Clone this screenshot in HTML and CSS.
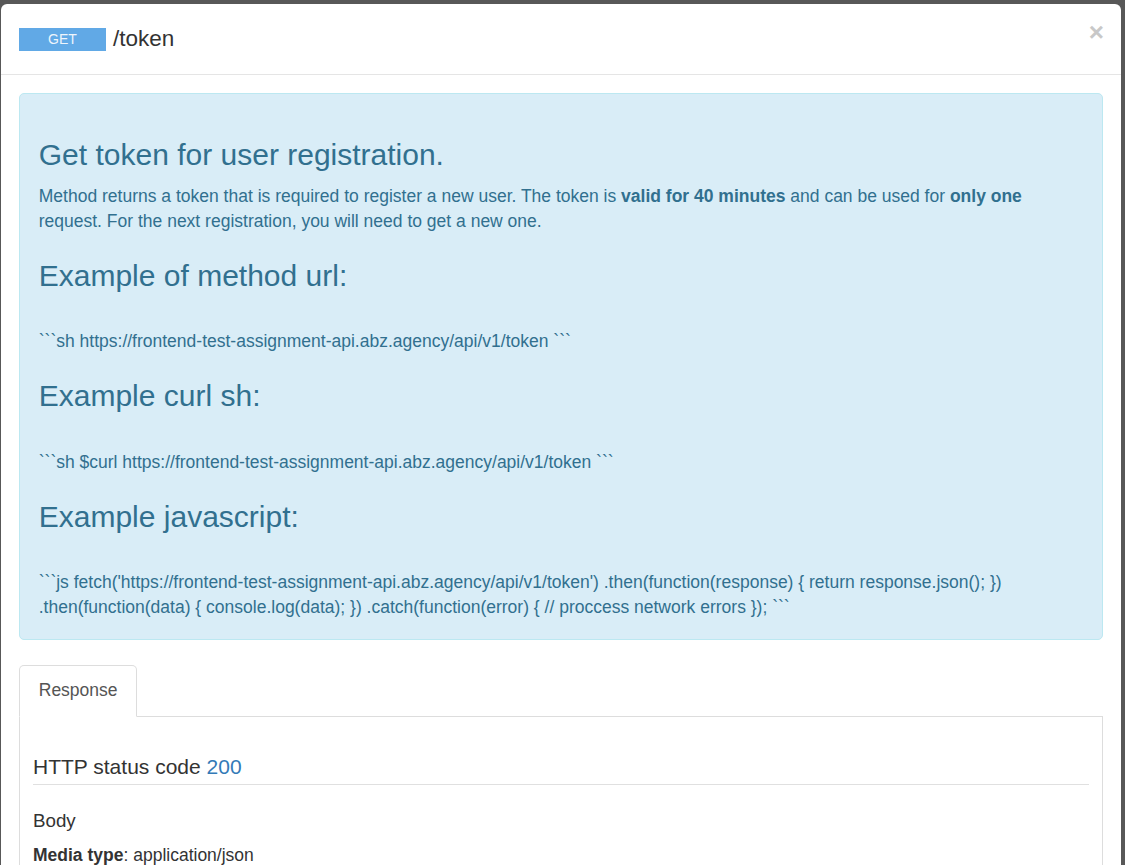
FILE: index.html
```html
<!DOCTYPE html>
<html lang="en">
<head>
<meta charset="utf-8">
<title>/token</title>
<link rel="stylesheet" href="styles.css">
</head>
<body>
<div class="modal">
  <div class="modal-header">
    <h4 class="modal-title"><span class="method-get">GET</span><span class="path">/token</span></h4>
    <button class="close" type="button">×</button>
  </div>
  <div class="modal-body">
    <div class="alert">
      <h3>Get token for user registration.</h3>
      <p>Method returns a token that is required to register a new user. The token is <strong>valid for 40 minutes</strong> and can be used for <strong>only one</strong> request. For the next registration, you will need to get a new one.</p>
      <h3>Example of method url:</h3>
      <p class="code">```sh https://frontend-test-assignment-api.abz.agency/api/v1/token ```</p>
      <h3>Example curl sh:</h3>
      <p class="code">```sh $curl https://frontend-test-assignment-api.abz.agency/api/v1/token ```</p>
      <h3>Example javascript:</h3>
      <p class="code">```js fetch('https://frontend-test-assignment-api.abz.agency/api/v1/token') .then(function(response) { return response.json(); }) .then(function(data) { console.log(data); }) .catch(function(error) { // proccess network errors }); ```</p>
    </div>
    <ul class="tabs">
      <li class="tab active">Response</li>
    </ul>
    <div class="tab-pane">
      <h4 class="status">HTTP status code <span class="code-num">200</span></h4>
      <div class="body-label">Body</div>
      <div class="media"><strong>Media type</strong>: application/json</div>
    </div>
  </div>
</div>
</body>
</html>
```
FILE: styles.css
```css
html, body {
  margin: 0;
  padding: 0;
  height: 100%;
  overflow: hidden;
}
body {
  background: #585858;
  font-family: "Liberation Sans", Arial, Helvetica, sans-serif;
  font-size: 17.5px;
  line-height: 25px;
  color: #333;
}
.modal {
  margin: 4px 4px 0 1px;
  background: #fff;
  border-radius: 6px 6px 0 0;
  min-height: 900px;
}
.modal-header {
  padding: 18.75px 18px;
  border-bottom: 1px solid #e5e5e5;
  display: flex;
  justify-content: space-between;
  align-items: flex-start;
}
.modal-title {
  margin: 0;
  font-size: 22.5px;
  line-height: 32px;
  font-weight: normal;
  color: #333;
  display: flex;
  align-items: center;
  gap: 7px;
}
.method-get {
  display: inline-block;
  width: 87px;
  height: 23px;
  line-height: 23px;
  background: #61a9e6;
  color: #eef5fc;
  font-size: 14px;
  text-align: center;
  margin-top: 1px;
}
.close {
  border: 0;
  background: none;
  padding: 0;
  font-family: "Liberation Sans", Arial, sans-serif;
  font-size: 26px;
  font-weight: bold;
  line-height: 1;
  color: #c8c8c8;
  margin-top: -4px;
  margin-right: -1px;
  cursor: pointer;
}
.modal-body {
  padding: 18.75px 18px;
}
.alert {
  padding: 18.75px;
  background: #d9edf7;
  border: 1px solid #bce8f1;
  border-radius: 5px;
  color: #31708f;
  margin-bottom: 25px;
}
.alert h3 {
  font-size: 30px;
  line-height: 1.1;
  font-weight: normal;
  margin: 25px 0 12.5px;
}
.alert p {
  margin: 0 0 12.5px;
}
.alert p.code {
  margin-top: 37.5px;
}
.alert p:last-child {
  margin-bottom: 0;
}
.tabs {
  list-style: none;
  margin: 0;
  padding: 0;
  display: flex;
  border-bottom: 1px solid #ddd;
}
.tab {
  margin-bottom: -1px;
  padding: 12.5px 18.75px;
  line-height: 25px;
  border: 1px solid #ddd;
  border-bottom-color: transparent;
  border-radius: 5px 5px 0 0;
  background: #fff;
  color: #555;
}
.tab-pane {
  border: 1px solid #ddd;
  border-top: 0;
  padding: 12.5px 13px 40px;
}
.status {
  margin: 26px 0 0;
  padding-bottom: 6px;
  font-size: 21px;
  line-height: 1.1;
  font-weight: normal;
  color: #333;
  border-bottom: 1px solid #e0e0e0;
}
.code-num {
  color: #337ab7;
}
.body-label {
  margin-top: 22.5px;
  font-size: 18.75px;
  line-height: 25px;
}
.media {
  margin-top: 10px;
}
```
